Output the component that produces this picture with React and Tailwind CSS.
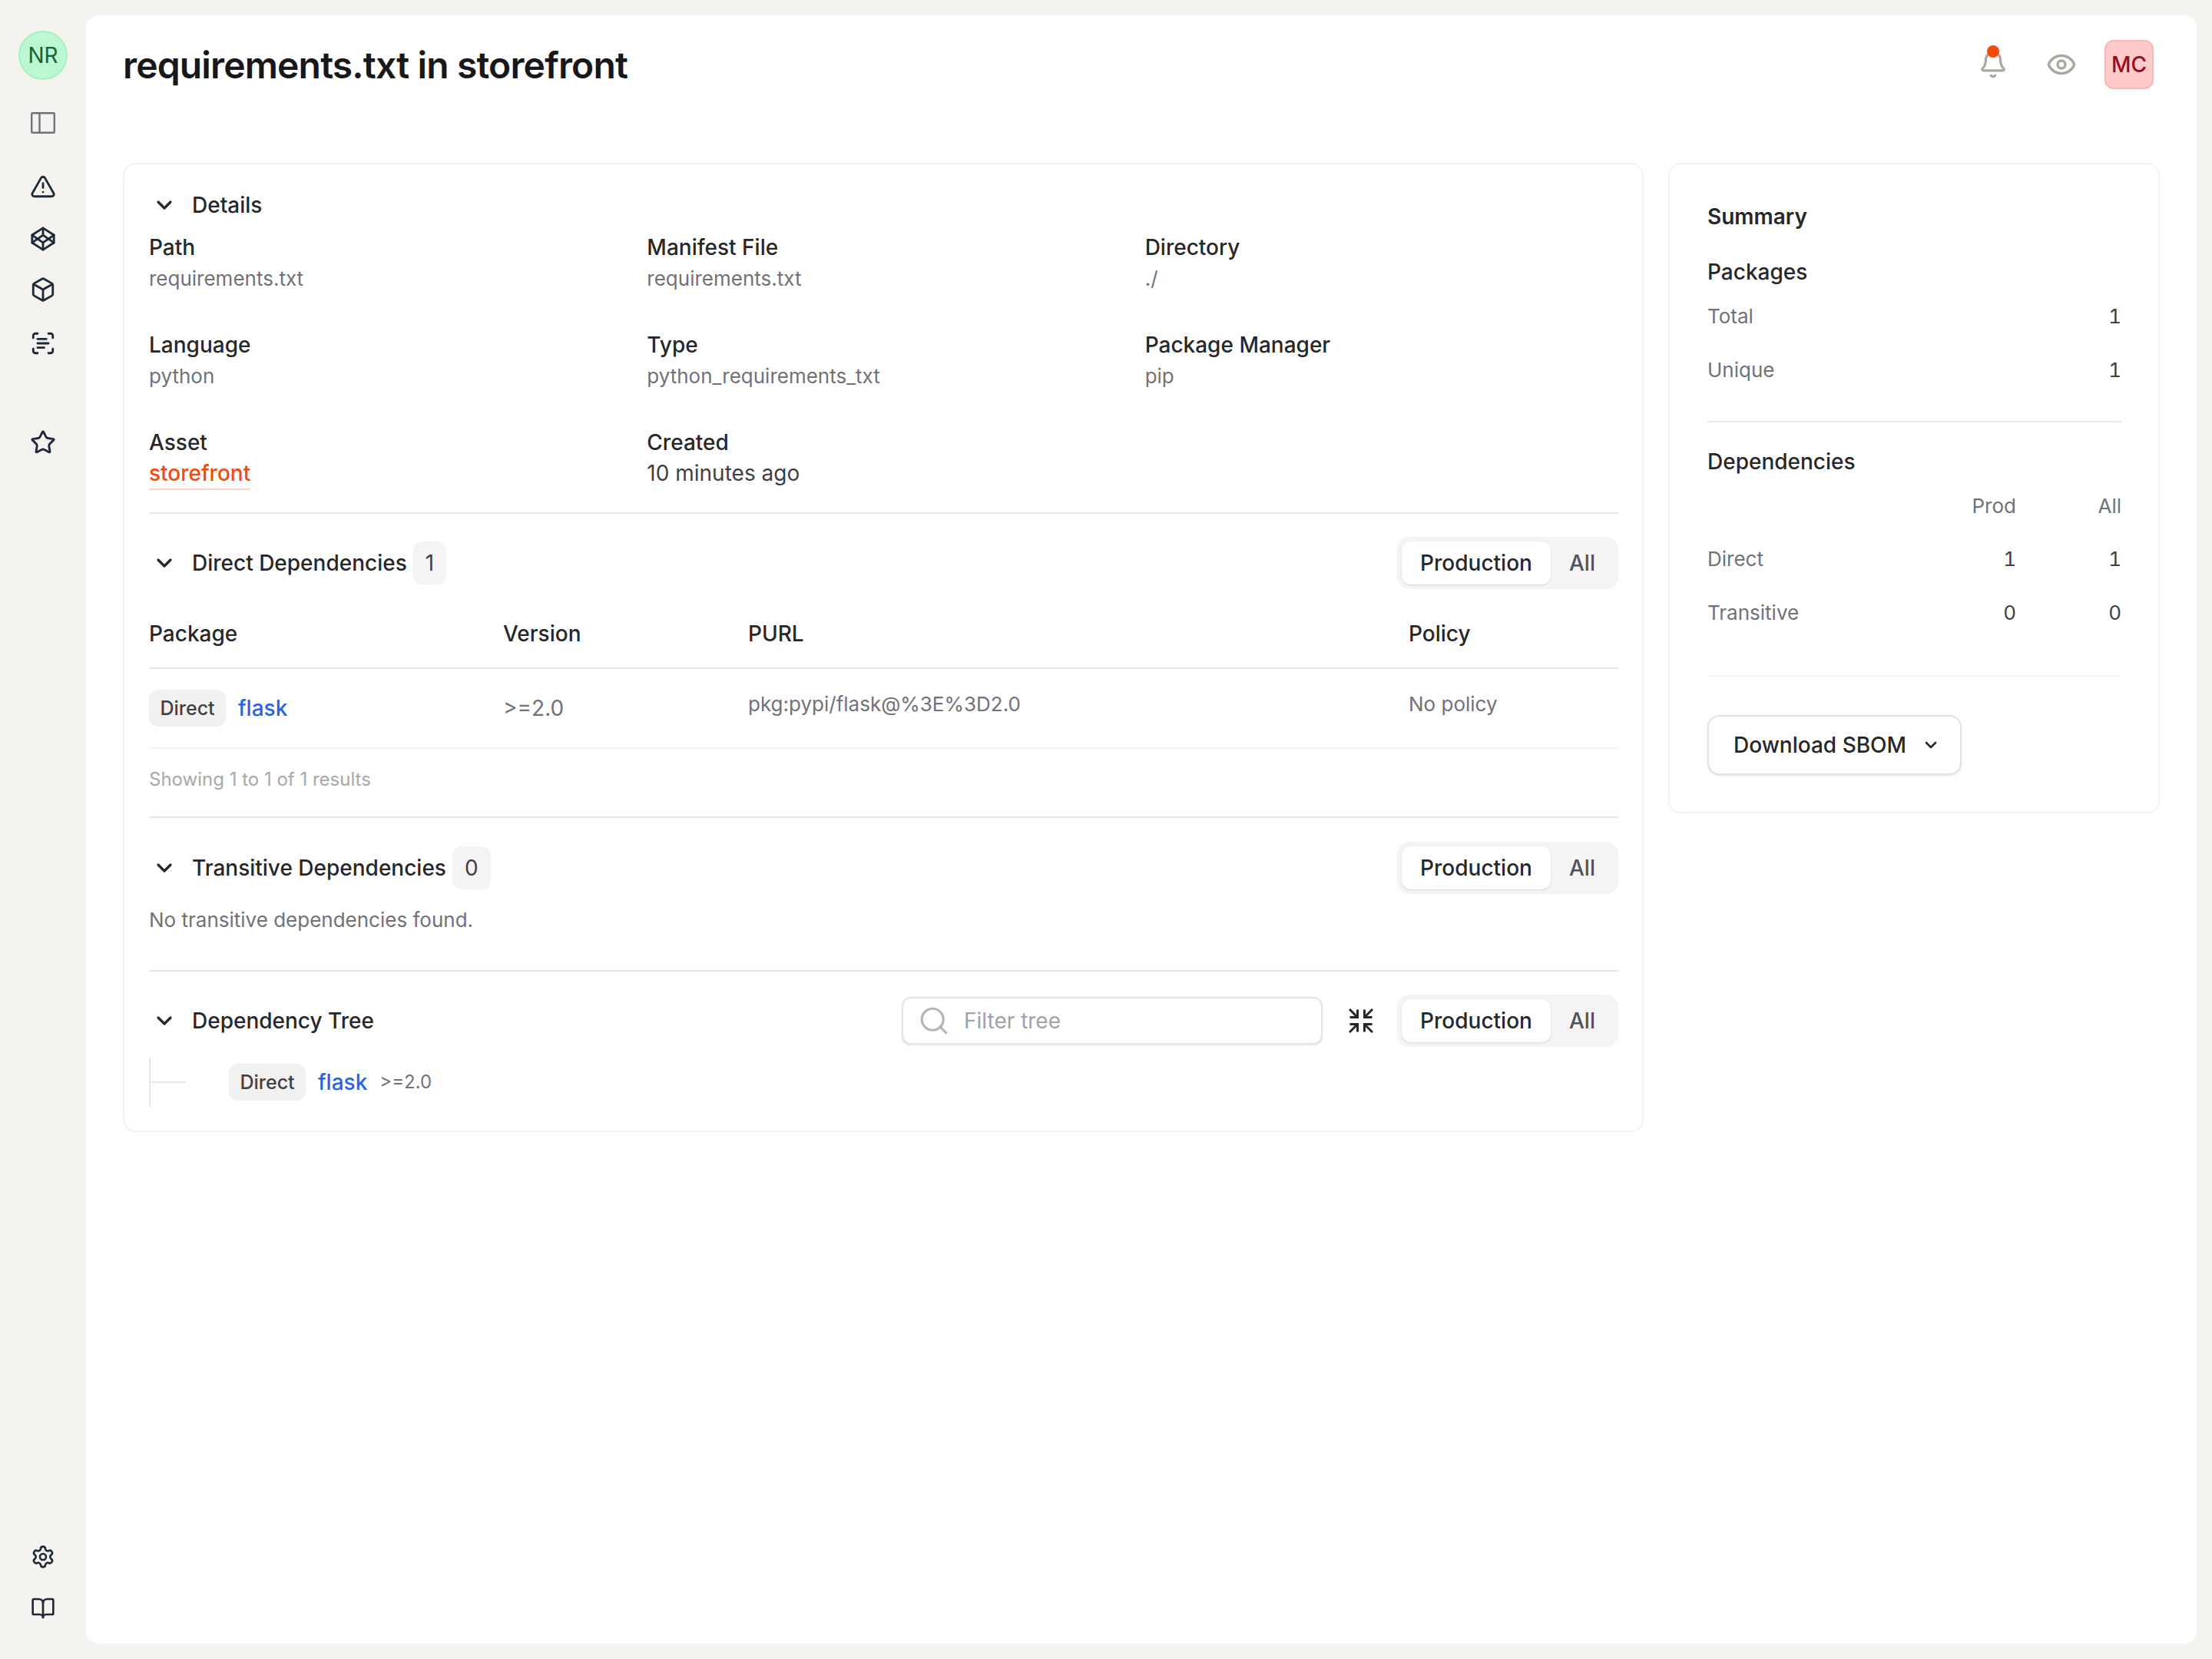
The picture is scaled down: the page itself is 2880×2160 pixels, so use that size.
import { BookOpen, Box, Bell, ChevronDown, Codepen, Eye, ScanText, Search, Settings, Star, TriangleAlert } from 'lucide-react'

const navIcon = 'text-[#1f2937]'

const Toggle = () => (
  <div className="flex h-[68px] items-center rounded-2xl bg-[#f4f4f5] p-[6px] text-[28px] font-medium">
    <div className="flex h-14 w-[194px] items-center justify-center rounded-xl bg-white text-[#27272a] shadow-sm">Production</div>
    <div className="flex h-14 w-[82px] items-center justify-center text-[#52525b]">All</div>
  </div>
)

const SectionTitle = ({ title, count }) => (
  <div className="flex items-center">
    <ChevronDown size={32} strokeWidth={2.4} className="ml-1 mr-5 text-[#27272a]" />
    <span className="text-[28px] font-medium text-[#27272a]">{title}</span>
    {count !== undefined && (
      <span className="ml-2 flex h-14 items-center rounded-xl bg-[#f4f4f5] px-4 text-[28px] text-[#3f3f46]">{count}</span>
    )}
  </div>
)

const Badge = () => (
  <span className="flex h-12 w-[100px] items-center justify-center rounded-xl bg-[#f1f1f1] pt-0.5 text-[25px] font-medium text-[#3f3f46]">Direct</span>
)

const Field = ({ label, value, children }) => (
  <div>
    <div className="text-[28px] leading-10 font-medium text-[#27272a]">{label}</div>
    {children || <div className="text-[26px] leading-[42px] text-[#71717a]">{value}</div>}
  </div>
)

const App = () => {
  return (
    <div className="flex h-[2160px] bg-[#f4f3ef] font-['Inter',sans-serif]">
      <aside className="flex w-[112px] shrink-0 flex-col items-center pt-10 pb-[50px]">
        <div className="flex h-16 w-16 items-center justify-center rounded-full border-2 border-[#a7f0c4] bg-[#bbf7d0] text-[28px] text-[#14633a]">NR</div>
        <svg className="mt-[42px]" width="32" height="28" viewBox="0 0 32 28" fill="none" stroke="#71717a" strokeWidth="2.4">
          <rect x="1.2" y="1.2" width="29.6" height="25.6" rx="1.5" />
          <path d="M11.5 1.2v25.6" />
        </svg>
        <TriangleAlert size={34} strokeWidth={2} className={`mt-[52px] ${navIcon}`} />
        <Codepen size={34} strokeWidth={2} className={`mt-[34px] ${navIcon}`} />
        <Box size={34} strokeWidth={2} className={`mt-8 ${navIcon}`} />
        <ScanText size={34} strokeWidth={2} className={`mt-9 ${navIcon}`} />
        <Star size={34} strokeWidth={2} className={`mt-[95px] ${navIcon}`} />
        <Settings size={32} strokeWidth={2} className={`mt-auto ${navIcon}`} />
        <BookOpen size={32} strokeWidth={2} className={`mt-[35px] ${navIcon}`} />
      </aside>

      <main className="my-5 mr-5 flex-1 rounded-2xl bg-white px-12">
        <header className="flex h-[192px] items-start justify-between">
          <h1 className="mt-[36px] text-[48px] leading-[58px] font-semibold tracking-[-0.85px] text-[#18181b]">requirements.txt in storefront</h1>
          <div className="mt-8 mr-2 flex items-center">
            <div className="relative">
              <Bell size={38} strokeWidth={2} className="text-[#a8a8a0]" />
              <span className="absolute -top-[6px] left-[11px] h-4 w-4 rounded-full bg-[#f6490d]" />
            </div>
            <Eye size={40} strokeWidth={2} className="ml-[50px] text-[#a8a8a0]" />
            <div className="ml-[36px] flex h-16 w-16 items-center justify-center rounded-xl border-2 border-[#fbb6b6] bg-[#fecaca] text-[28px] font-medium text-[#9f0a14]">MC</div>
          </div>
        </header>

        <div className="flex items-start gap-8">
          <div className="w-[1980px] rounded-2xl border-2 border-[#f4f3ef] pt-8 pr-[31px] pb-[31px] pl-8">
            <section className="border-b-2 border-[#e7e7e7] pb-[29px]">
              <div className="flex h-[42px] items-center"><SectionTitle title="Details" /></div>
              <div className="mt-[14px] grid grid-cols-3 gap-x-8 gap-y-[45px]">
                <Field label="Path" value="requirements.txt" />
                <Field label="Manifest File" value="requirements.txt" />
                <Field label="Directory" value="./" />
                <Field label="Language" value="python" />
                <Field label="Type" value="python_requirements_txt" />
                <Field label="Package Manager" value="pip" />
                <Field label="Asset">
                  <div className="w-fit border-b-2 border-[#fcd5c8] text-[28px] leading-10 font-medium text-[#f4490d]">storefront</div>
                </Field>
                <Field label="Created">
                  <div className="text-[28px] leading-10 text-[#3f3f46]">10 minutes ago</div>
                </Field>
              </div>
            </section>

            <section className="border-b-2 border-[#e7e7e7] pt-[30px] pb-[31px]">
              <div className="flex items-center justify-between">
                <SectionTitle title="Direct Dependencies" count="1" />
                <Toggle />
              </div>
              <div className="mt-[14px] grid h-[90px] grid-cols-[461px_319px_860px_1fr] items-center border-b-2 border-[#e7e7e7] text-[28px] font-medium text-[#27272a]">
                <div>Package</div>
                <div>Version</div>
                <div>PURL</div>
                <div>Policy</div>
              </div>
              <div className="grid h-[104px] grid-cols-[461px_319px_860px_1fr] items-center border-b-2 border-[#f4f4f4]">
                <div className="flex items-center gap-4">
                  <Badge />
                  <span className="text-[28px] font-medium text-[#2563eb]">flask</span>
                </div>
                <div className="text-[28px] text-[#71717a]">&gt;=2.0</div>
                <div className="mb-3 text-[26px] text-[#71717a]">pkg:pypi/flask@%3E%3D2.0</div>
                <div className="mb-3 text-[26px] text-[#71717a]">No policy</div>
              </div>
              <div className="mt-[23px] text-[24px] leading-[34px] text-[#a8a8a8]">Showing 1 to 1 of 1 results</div>
            </section>

            <section className="border-b-2 border-[#e7e7e7] pt-[31px] pb-[46px]">
              <div className="flex items-center justify-between">
                <SectionTitle title="Transitive Dependencies" count="0" />
                <Toggle />
              </div>
              <div className="mt-[15px] text-[26px] leading-[38px] text-[#71717a]">No transitive dependencies found.</div>
            </section>

            <section className="pt-[30px]">
              <div className="flex items-center justify-between">
                <SectionTitle title="Dependency Tree" />
                <div className="flex items-center">
                  <div className="flex h-[62px] w-[548px] items-center rounded-xl border-2 border-[#e4e4e7] bg-white pl-[19px] shadow-sm">
                    <Search size={42} strokeWidth={1.8} className="text-[#b4b4bb]" />
                    <span className="ml-[18px] text-[28px] text-[#a1a1aa]">Filter tree</span>
                  </div>
                  <svg className="ml-[34px] mr-[31px]" width="32" height="32" viewBox="0 0 32 32" fill="none" stroke="#27272a" strokeWidth="3">
                    <path d="M1 1 11.5 11.5M11.5 1.5v10H1.5M31 1 20.5 11.5M20.5 1.5v10h10M1 31l10.5-10.5M11.5 30.5v-10H1.5M31 31 20.5 20.5M20.5 30.5v-10h10" />
                  </svg>
                  <Toggle />
                </div>
              </div>
              <div className="mt-[14px] flex h-16 items-center border-l-2 border-[#e7e7e7]">
                <div className="h-0.5 w-[46px] bg-[#e7e7e7]" />
                <div className="ml-14 flex items-center">
                  <Badge />
                  <span className="ml-4 text-[28px] font-medium text-[#2563eb]">flask</span>
                  <span className="ml-4 text-[24px] text-[#71717a]">&gt;=2.0</span>
                </div>
              </div>
            </section>
          </div>

          <div className="flex-1 rounded-2xl border-2 border-[#f4f3ef] pt-[50px] pr-12 pb-[48px] pl-[49px]">
            <div className="text-[28px] leading-9 font-semibold text-[#27272a]">Summary</div>
            <div className="mt-9 text-[28px] leading-9 font-medium text-[#27272a]">Packages</div>
            <div className="mt-[21px] flex h-9 items-center justify-between text-[26px]">
              <span className="text-[#71717a]">Total</span>
              <span className="text-[#3f3f46] tabular-nums">1</span>
            </div>
            <div className="mt-[34px] flex h-9 items-center justify-between text-[26px]">
              <span className="text-[#71717a]">Unique</span>
              <span className="text-[#3f3f46] tabular-nums">1</span>
            </div>
            <div className="mt-[49px] h-0.5 bg-[#e7e7e7]" />
            <div className="mt-[33px] text-[28px] leading-9 font-medium text-[#27272a]">Dependencies</div>
            <div className="mt-5 grid h-9 grid-cols-[1fr_137px_137px] items-center text-right text-[26px] text-[#71717a]">
              <span />
              <span>Prod</span>
              <span>All</span>
            </div>
            <div className="mt-[33px] grid h-9 grid-cols-[1fr_137px_137px] items-center text-right text-[26px] text-[#3f3f46] tabular-nums">
              <span className="text-left text-[#71717a]">Direct</span>
              <span>1</span>
              <span>1</span>
            </div>
            <div className="mt-[34px] grid h-9 grid-cols-[1fr_137px_137px] items-center text-right text-[26px] text-[#3f3f46] tabular-nums">
              <span className="text-left text-[#71717a]">Transitive</span>
              <span>0</span>
              <span>0</span>
            </div>
            <div className="mt-[65px] h-0.5 bg-[#f4f4f4]" />
            <div className="mt-[50px] flex h-[78px] w-[331px] items-center rounded-2xl border-2 border-[#e4e4e7] bg-white pl-8 text-[28px] font-medium text-[#27272a] shadow-sm">
              Download SBOM
              <ChevronDown size={24} strokeWidth={2.6} className="ml-[20px]" />
            </div>
          </div>
        </div>
      </main>
    </div>
  )
}

export default App
